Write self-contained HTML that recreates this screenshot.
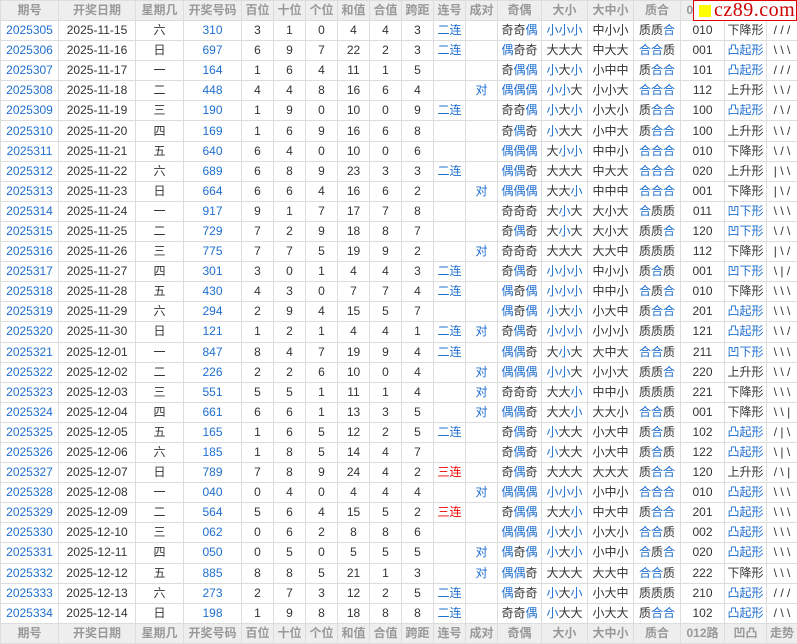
<!DOCTYPE html><html><head><meta charset="utf-8"><style>
body{margin:0;background:#fff;width:797px;height:643px;overflow:hidden;position:relative}
table{border-collapse:collapse;table-layout:fixed;width:797px;font-family:"Liberation Sans","Noto Sans CJK SC",sans-serif;font-size:12px;color:#333}
td,th{border:1px solid #ddd;text-align:center;padding:0;white-space:nowrap;overflow:hidden;height:19px;line-height:19px}
th{background:#eee;color:#999;font-weight:bold;height:19px}
tbody tr{height:20.1px}
.b{color:#1f6fd0}.r{color:#e00}
#logo{position:absolute;left:693px;top:0;width:102px;height:19px;background:#fff;border:1px solid #d00;}
#logo i{position:absolute;left:5px;top:4px;width:12px;height:12px;background:#ff0}
#logo span{position:absolute;left:20px;top:-2px;font-family:"Liberation Serif",serif;font-size:20px;color:#c00;letter-spacing:0.5px}
</style></head><body>
<table>
<colgroup><col style="width:58px"><col style="width:77px"><col style="width:48px"><col style="width:58px"><col style="width:32px"><col style="width:32px"><col style="width:32px"><col style="width:32px"><col style="width:32px"><col style="width:32px"><col style="width:32px"><col style="width:32px"><col style="width:44px"><col style="width:46px"><col style="width:46px"><col style="width:47px"><col style="width:44px"><col style="width:42px"><col style="width:31px"></colgroup>
<thead><tr><th>期号</th><th>开奖日期</th><th>星期几</th><th>开奖号码</th><th>百位</th><th>十位</th><th>个位</th><th>和值</th><th>合值</th><th>跨距</th><th>连号</th><th>成对</th><th>奇偶</th><th>大小</th><th>大中小</th><th>质合</th><th>012路</th><th>凹凸</th><th>走势</th></tr></thead>
<tbody>
<tr><td class="b">2025305</td><td>2025-11-15</td><td>六</td><td class="b">310</td><td>3</td><td>1</td><td>0</td><td>4</td><td>4</td><td>3</td><td class="b">二连</td><td></td><td>奇奇<span class="b">偶</span></td><td class="b">小小小</td><td>中小小</td><td>质质<span class="b">合</span></td><td>010</td><td>下降形</td><td>/ / /</td></tr>
<tr><td class="b">2025306</td><td>2025-11-16</td><td>日</td><td class="b">697</td><td>6</td><td>9</td><td>7</td><td>22</td><td>2</td><td>3</td><td class="b">二连</td><td></td><td><span class="b">偶</span>奇奇</td><td>大大大</td><td>中大大</td><td><span class="b">合合</span>质</td><td>001</td><td class="b">凸起形</td><td>\ \ \</td></tr>
<tr><td class="b">2025307</td><td>2025-11-17</td><td>一</td><td class="b">164</td><td>1</td><td>6</td><td>4</td><td>11</td><td>1</td><td>5</td><td></td><td></td><td>奇<span class="b">偶偶</span></td><td><span class="b">小</span>大<span class="b">小</span></td><td>小中中</td><td>质<span class="b">合合</span></td><td>101</td><td class="b">凸起形</td><td>/ / /</td></tr>
<tr><td class="b">2025308</td><td>2025-11-18</td><td>二</td><td class="b">448</td><td>4</td><td>4</td><td>8</td><td>16</td><td>6</td><td>4</td><td></td><td class="b">对</td><td class="b">偶偶偶</td><td><span class="b">小小</span>大</td><td>小小大</td><td class="b">合合合</td><td>112</td><td>上升形</td><td>\ \ /</td></tr>
<tr><td class="b">2025309</td><td>2025-11-19</td><td>三</td><td class="b">190</td><td>1</td><td>9</td><td>0</td><td>10</td><td>0</td><td>9</td><td class="b">二连</td><td></td><td>奇奇<span class="b">偶</span></td><td><span class="b">小</span>大<span class="b">小</span></td><td>小大小</td><td>质<span class="b">合合</span></td><td>100</td><td class="b">凸起形</td><td>/ \ /</td></tr>
<tr><td class="b">2025310</td><td>2025-11-20</td><td>四</td><td class="b">169</td><td>1</td><td>6</td><td>9</td><td>16</td><td>6</td><td>8</td><td></td><td></td><td>奇<span class="b">偶</span>奇</td><td><span class="b">小</span>大大</td><td>小中大</td><td>质<span class="b">合合</span></td><td>100</td><td>上升形</td><td>\ \ /</td></tr>
<tr><td class="b">2025311</td><td>2025-11-21</td><td>五</td><td class="b">640</td><td>6</td><td>4</td><td>0</td><td>10</td><td>0</td><td>6</td><td></td><td></td><td class="b">偶偶偶</td><td>大<span class="b">小小</span></td><td>中中小</td><td class="b">合合合</td><td>010</td><td>下降形</td><td>\ / \</td></tr>
<tr><td class="b">2025312</td><td>2025-11-22</td><td>六</td><td class="b">689</td><td>6</td><td>8</td><td>9</td><td>23</td><td>3</td><td>3</td><td class="b">二连</td><td></td><td><span class="b">偶偶</span>奇</td><td>大大大</td><td>中大大</td><td class="b">合合合</td><td>020</td><td>上升形</td><td>| \ \</td></tr>
<tr><td class="b">2025313</td><td>2025-11-23</td><td>日</td><td class="b">664</td><td>6</td><td>6</td><td>4</td><td>16</td><td>6</td><td>2</td><td></td><td class="b">对</td><td class="b">偶偶偶</td><td>大大<span class="b">小</span></td><td>中中中</td><td class="b">合合合</td><td>001</td><td>下降形</td><td>| \ /</td></tr>
<tr><td class="b">2025314</td><td>2025-11-24</td><td>一</td><td class="b">917</td><td>9</td><td>1</td><td>7</td><td>17</td><td>7</td><td>8</td><td></td><td></td><td>奇奇奇</td><td>大<span class="b">小</span>大</td><td>大小大</td><td><span class="b">合</span>质质</td><td>011</td><td class="b">凹下形</td><td>\ \ \</td></tr>
<tr><td class="b">2025315</td><td>2025-11-25</td><td>二</td><td class="b">729</td><td>7</td><td>2</td><td>9</td><td>18</td><td>8</td><td>7</td><td></td><td></td><td>奇<span class="b">偶</span>奇</td><td>大<span class="b">小</span>大</td><td>大小大</td><td>质质<span class="b">合</span></td><td>120</td><td class="b">凹下形</td><td>\ / \</td></tr>
<tr><td class="b">2025316</td><td>2025-11-26</td><td>三</td><td class="b">775</td><td>7</td><td>7</td><td>5</td><td>19</td><td>9</td><td>2</td><td></td><td class="b">对</td><td>奇奇奇</td><td>大大大</td><td>大大中</td><td>质质质</td><td>112</td><td>下降形</td><td>| \ /</td></tr>
<tr><td class="b">2025317</td><td>2025-11-27</td><td>四</td><td class="b">301</td><td>3</td><td>0</td><td>1</td><td>4</td><td>4</td><td>3</td><td class="b">二连</td><td></td><td>奇<span class="b">偶</span>奇</td><td class="b">小小小</td><td>中小小</td><td>质<span class="b">合</span>质</td><td>001</td><td class="b">凹下形</td><td>\ | /</td></tr>
<tr><td class="b">2025318</td><td>2025-11-28</td><td>五</td><td class="b">430</td><td>4</td><td>3</td><td>0</td><td>7</td><td>7</td><td>4</td><td class="b">二连</td><td></td><td><span class="b">偶</span>奇<span class="b">偶</span></td><td class="b">小小小</td><td>中中小</td><td><span class="b">合</span>质<span class="b">合</span></td><td>010</td><td>下降形</td><td>\ \ \</td></tr>
<tr><td class="b">2025319</td><td>2025-11-29</td><td>六</td><td class="b">294</td><td>2</td><td>9</td><td>4</td><td>15</td><td>5</td><td>7</td><td></td><td></td><td><span class="b">偶</span>奇<span class="b">偶</span></td><td><span class="b">小</span>大<span class="b">小</span></td><td>小大中</td><td>质<span class="b">合合</span></td><td>201</td><td class="b">凸起形</td><td>\ \ \</td></tr>
<tr><td class="b">2025320</td><td>2025-11-30</td><td>日</td><td class="b">121</td><td>1</td><td>2</td><td>1</td><td>4</td><td>4</td><td>1</td><td class="b">二连</td><td class="b">对</td><td>奇<span class="b">偶</span>奇</td><td class="b">小小小</td><td>小小小</td><td>质质质</td><td>121</td><td class="b">凸起形</td><td>\ \ /</td></tr>
<tr><td class="b">2025321</td><td>2025-12-01</td><td>一</td><td class="b">847</td><td>8</td><td>4</td><td>7</td><td>19</td><td>9</td><td>4</td><td class="b">二连</td><td></td><td><span class="b">偶偶</span>奇</td><td>大<span class="b">小</span>大</td><td>大中大</td><td><span class="b">合合</span>质</td><td>211</td><td class="b">凹下形</td><td>\ \ \</td></tr>
<tr><td class="b">2025322</td><td>2025-12-02</td><td>二</td><td class="b">226</td><td>2</td><td>2</td><td>6</td><td>10</td><td>0</td><td>4</td><td></td><td class="b">对</td><td class="b">偶偶偶</td><td><span class="b">小小</span>大</td><td>小小大</td><td>质质<span class="b">合</span></td><td>220</td><td>上升形</td><td>\ \ /</td></tr>
<tr><td class="b">2025323</td><td>2025-12-03</td><td>三</td><td class="b">551</td><td>5</td><td>5</td><td>1</td><td>11</td><td>1</td><td>4</td><td></td><td class="b">对</td><td>奇奇奇</td><td>大大<span class="b">小</span></td><td>中中小</td><td>质质质</td><td>221</td><td>下降形</td><td>\ \ \</td></tr>
<tr><td class="b">2025324</td><td>2025-12-04</td><td>四</td><td class="b">661</td><td>6</td><td>6</td><td>1</td><td>13</td><td>3</td><td>5</td><td></td><td class="b">对</td><td><span class="b">偶偶</span>奇</td><td>大大<span class="b">小</span></td><td>大大小</td><td><span class="b">合合</span>质</td><td>001</td><td>下降形</td><td>\ \ |</td></tr>
<tr><td class="b">2025325</td><td>2025-12-05</td><td>五</td><td class="b">165</td><td>1</td><td>6</td><td>5</td><td>12</td><td>2</td><td>5</td><td class="b">二连</td><td></td><td>奇<span class="b">偶</span>奇</td><td><span class="b">小</span>大大</td><td>小大中</td><td>质<span class="b">合</span>质</td><td>102</td><td class="b">凸起形</td><td>/ | \</td></tr>
<tr><td class="b">2025326</td><td>2025-12-06</td><td>六</td><td class="b">185</td><td>1</td><td>8</td><td>5</td><td>14</td><td>4</td><td>7</td><td></td><td></td><td>奇<span class="b">偶</span>奇</td><td><span class="b">小</span>大大</td><td>小大中</td><td>质<span class="b">合</span>质</td><td>122</td><td class="b">凸起形</td><td>\ | \</td></tr>
<tr><td class="b">2025327</td><td>2025-12-07</td><td>日</td><td class="b">789</td><td>7</td><td>8</td><td>9</td><td>24</td><td>4</td><td>2</td><td class="r">三连</td><td></td><td>奇<span class="b">偶</span>奇</td><td>大大大</td><td>大大大</td><td>质<span class="b">合合</span></td><td>120</td><td>上升形</td><td>/ \ |</td></tr>
<tr><td class="b">2025328</td><td>2025-12-08</td><td>一</td><td class="b">040</td><td>0</td><td>4</td><td>0</td><td>4</td><td>4</td><td>4</td><td></td><td class="b">对</td><td class="b">偶偶偶</td><td class="b">小小小</td><td>小中小</td><td class="b">合合合</td><td>010</td><td class="b">凸起形</td><td>\ \ \</td></tr>
<tr><td class="b">2025329</td><td>2025-12-09</td><td>二</td><td class="b">564</td><td>5</td><td>6</td><td>4</td><td>15</td><td>5</td><td>2</td><td class="r">三连</td><td></td><td>奇<span class="b">偶偶</span></td><td>大大<span class="b">小</span></td><td>中大中</td><td>质<span class="b">合合</span></td><td>201</td><td class="b">凸起形</td><td>\ \ \</td></tr>
<tr><td class="b">2025330</td><td>2025-12-10</td><td>三</td><td class="b">062</td><td>0</td><td>6</td><td>2</td><td>8</td><td>8</td><td>6</td><td></td><td></td><td class="b">偶偶偶</td><td><span class="b">小</span>大<span class="b">小</span></td><td>小大小</td><td><span class="b">合合</span>质</td><td>002</td><td class="b">凸起形</td><td>\ \ \</td></tr>
<tr><td class="b">2025331</td><td>2025-12-11</td><td>四</td><td class="b">050</td><td>0</td><td>5</td><td>0</td><td>5</td><td>5</td><td>5</td><td></td><td class="b">对</td><td><span class="b">偶</span>奇<span class="b">偶</span></td><td><span class="b">小</span>大<span class="b">小</span></td><td>小中小</td><td><span class="b">合</span>质<span class="b">合</span></td><td>020</td><td class="b">凸起形</td><td>\ \ \</td></tr>
<tr><td class="b">2025332</td><td>2025-12-12</td><td>五</td><td class="b">885</td><td>8</td><td>8</td><td>5</td><td>21</td><td>1</td><td>3</td><td></td><td class="b">对</td><td><span class="b">偶偶</span>奇</td><td>大大大</td><td>大大中</td><td><span class="b">合合</span>质</td><td>222</td><td>下降形</td><td>\ \ \</td></tr>
<tr><td class="b">2025333</td><td>2025-12-13</td><td>六</td><td class="b">273</td><td>2</td><td>7</td><td>3</td><td>12</td><td>2</td><td>5</td><td class="b">二连</td><td></td><td><span class="b">偶</span>奇奇</td><td><span class="b">小</span>大<span class="b">小</span></td><td>小大中</td><td>质质质</td><td>210</td><td class="b">凸起形</td><td>/ / /</td></tr>
<tr><td class="b">2025334</td><td>2025-12-14</td><td>日</td><td class="b">198</td><td>1</td><td>9</td><td>8</td><td>18</td><td>8</td><td>8</td><td class="b">二连</td><td></td><td>奇奇<span class="b">偶</span></td><td><span class="b">小</span>大大</td><td>小大大</td><td>质<span class="b">合合</span></td><td>102</td><td class="b">凸起形</td><td>/ \ \</td></tr>
</tbody>
<tfoot><tr><th>期号</th><th>开奖日期</th><th>星期几</th><th>开奖号码</th><th>百位</th><th>十位</th><th>个位</th><th>和值</th><th>合值</th><th>跨距</th><th>连号</th><th>成对</th><th>奇偶</th><th>大小</th><th>大中小</th><th>质合</th><th>012路</th><th>凹凸</th><th>走势</th></tr></tfoot>
</table>
<div id="logo"><i></i><span>cz89.com</span></div>
</body></html>
